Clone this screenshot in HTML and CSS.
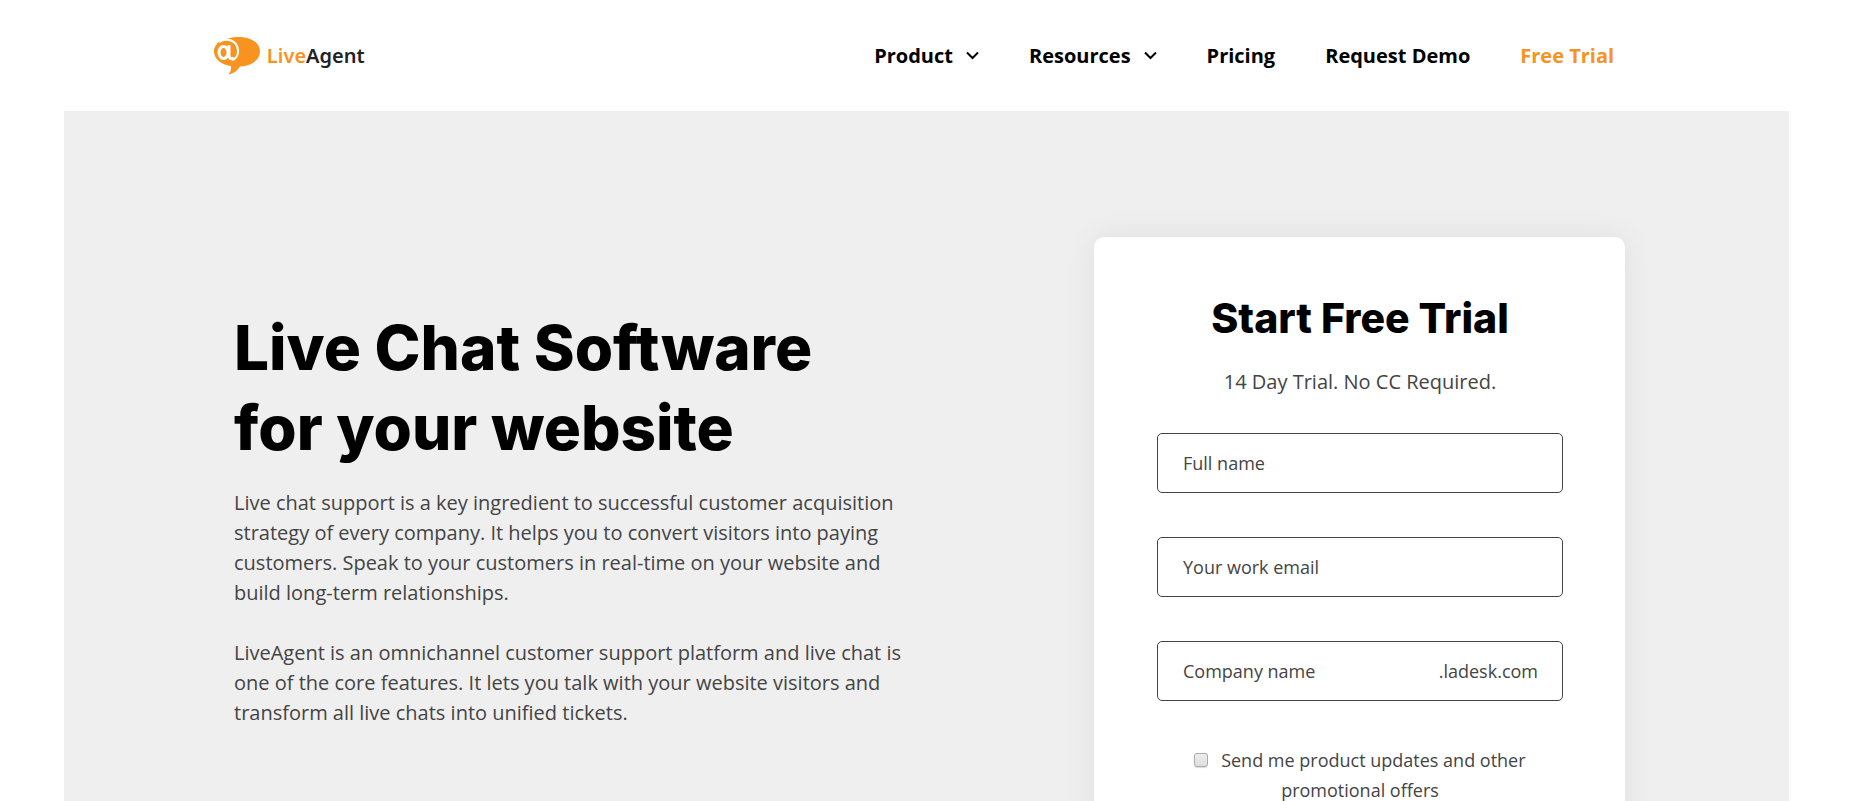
FILE: index.html
```html
<!DOCTYPE html>
<html lang="en">
<head>
  <meta charset="UTF-8">
  <meta name="viewport" content="width=device-width, initial-scale=1.0">
  <title>Live Chat Software | LiveAgent</title>
  <link rel="stylesheet" href="styles.css">
</head>
<body>
  <header class="header">
    <a class="logo" href="#">
      <svg class="logo-icon" width="46" height="38" viewBox="0 0 46 38" aria-hidden="true">
        <path fill="#f7931e" d="M25 0C37 0 46 6 46 14.500S37 29 26 29.500C24 33 20 36.500 14.500 37.500C16.500 35 17.500 32 17 29C7 27.500 0 22 0 14.500C0 6 12 0 25 0Z"/>
        <path fill="#fff" d="M0 0H17C10 2 4 5 0 11Z"/>
        <path fill="none" stroke="#f7931e" stroke-width="1.500" d="M1 16C0 9 5 4 12 3"/>
        <ellipse cx="9.500" cy="15.500" rx="4.500" ry="6" fill="none" stroke="#fff" stroke-width="3"/>
        <path fill="none" stroke="#fff" stroke-width="3" d="M15 8V18C15 22 18 22.500 20 21"/>
        <path fill="none" stroke="#fff" stroke-width="2.200" d="M5 5C12 0 23 3 24 13C24.300 18 22 22 18 23"/>
      </svg>
      <span class="logo-text"><span class="logo-live">Live</span>Agent</span>
    </a>
    <nav class="nav">
      <button class="nav-item" type="button">Product
        <svg class="arrow" width="13" height="9" viewBox="0 0 13 9" aria-hidden="true"><path d="M1 1.500L6.500 7L12 1.500"/></svg>
      </button>
      <button class="nav-item" type="button">Resources
        <svg class="arrow" width="13" height="9" viewBox="0 0 13 9" aria-hidden="true"><path d="M1 1.500L6.500 7L12 1.500"/></svg>
      </button>
      <a class="nav-item" href="#">Pricing</a>
      <a class="nav-item" href="#">Request Demo</a>
      <a class="nav-item trial" href="#">Free Trial</a>
    </nav>
  </header>

  <main class="hero">
    <div class="hero-inner">
      <div class="hero-text">
        <h1>Live Chat Software<br>for your website</h1>
        <p>Live chat support is a key ingredient to successful customer acquisition strategy of every company. It helps you to convert visitors into paying customers. Speak to your customers in real-time on your website and build long-term relationships.</p>
        <p>LiveAgent is an omnichannel customer support platform and live chat is one of the core features. It lets you talk with your website visitors and transform all live chats into unified tickets.</p>
      </div>

      <form class="card">
        <h2>Start Free Trial</h2>
        <p class="subtitle">14 Day Trial. No CC Required.</p>
        <div class="field">
          <input type="text" placeholder="Full name" aria-label="Full name">
        </div>
        <div class="field">
          <input type="email" placeholder="Your work email" aria-label="Your work email">
        </div>
        <div class="field">
          <input type="text" placeholder="Company name" aria-label="Company name">
          <span class="domain">.ladesk.com</span>
        </div>
        <div class="updates">
          <input type="checkbox" id="updates">
          <label for="updates">Send me product updates and other promotional offers</label>
        </div>
      </form>
    </div>
  </main>
</body>
</html>
```
FILE: styles.css
```css
* {
  box-sizing: border-box;
}
body {
  display: flex;
  flex-direction: column;
  height: 100vh;
  margin: 0;
  overflow: hidden;
  font-family: "Open Sans", sans-serif;
  font-size: 20px;
  line-height: 30px;
  color: #444;
  background: #fff;
}
.header {
  display: flex;
  justify-content: space-between;
  align-items: center;
  width: 77%;
  height: 111px;
  margin: 0 auto;
  padding: 0 24px 0 1px;
}
.logo {
  display: flex;
  align-items: center;
  gap: 7px;
  text-decoration: none;
}
.logo-text {
  font-family: "Noto Sans", sans-serif;
  font-size: 20px;
  font-weight: 600;
  color: #222;
}
.logo-live {
  color: #f7931e;
}
.nav {
  display: flex;
  align-items: center;
  gap: 50px;
}
.nav-item {
  display: flex;
  align-items: center;
  gap: 13px;
  padding: 0;
  border: none;
  background: none;
  font: bold 20px/30px "Open Sans", sans-serif;
  color: #000;
  text-decoration: none;
  white-space: nowrap;
  cursor: pointer;
}
.trial {
  color: #f7931e;
}
.arrow {
  fill: none;
  stroke: #000;
  stroke-width: 2;
}
.hero {
  flex: 1;
  min-height: 0;
  margin: 0 62px 0 64px;
  background: #efefef;
  overflow: hidden;
}
.hero-inner {
  display: flex;
  justify-content: space-between;
  align-items: flex-start;
  padding: 126px 164px 0 170px;
}
.hero-text {
  width: 680px;
  padding-top: 71px;
}
h1 {
  margin: 0 0 20px;
  font: 800 62px/80px Inter, sans-serif;
  color: #000;
}
.hero-text p {
  margin: 0 0 30px;
}
.card {
  width: 531px;
  padding: 56px 62px 60px 63px;
  border-radius: 10px;
  background: #fff;
  box-shadow: 0 0 30px rgba(0, 0, 0, 0.07);
  text-align: center;
}
h2 {
  margin: 0 0 24px;
  font: 800 41px/50px Inter, sans-serif;
  color: #000;
}
.subtitle {
  margin: 0 0 36px;
}
.field {
  display: flex;
  align-items: center;
  height: 60px;
  margin-bottom: 44px;
  padding: 0 24px 0 25px;
  border: 1px solid #444;
  border-radius: 5px;
  font-size: 18px;
}
.field input {
  flex: 1;
  min-width: 0;
  padding: 0;
  border: none;
  outline: none;
  background: none;
  font: inherit;
  color: #444;
}
.field input::placeholder {
  color: #444;
  opacity: 1;
}
.updates {
  padding: 0 36px;
  font-size: 18px;
}
.updates input {
  appearance: none;
  width: 14px;
  height: 14px;
  margin: 0 8px 0 0;
  border: 1px solid #aaa;
  border-radius: 3px;
  background: linear-gradient(#eee, #ddd);
  box-shadow: 0 1px 1px rgba(0, 0, 0, 0.15);
}
```
